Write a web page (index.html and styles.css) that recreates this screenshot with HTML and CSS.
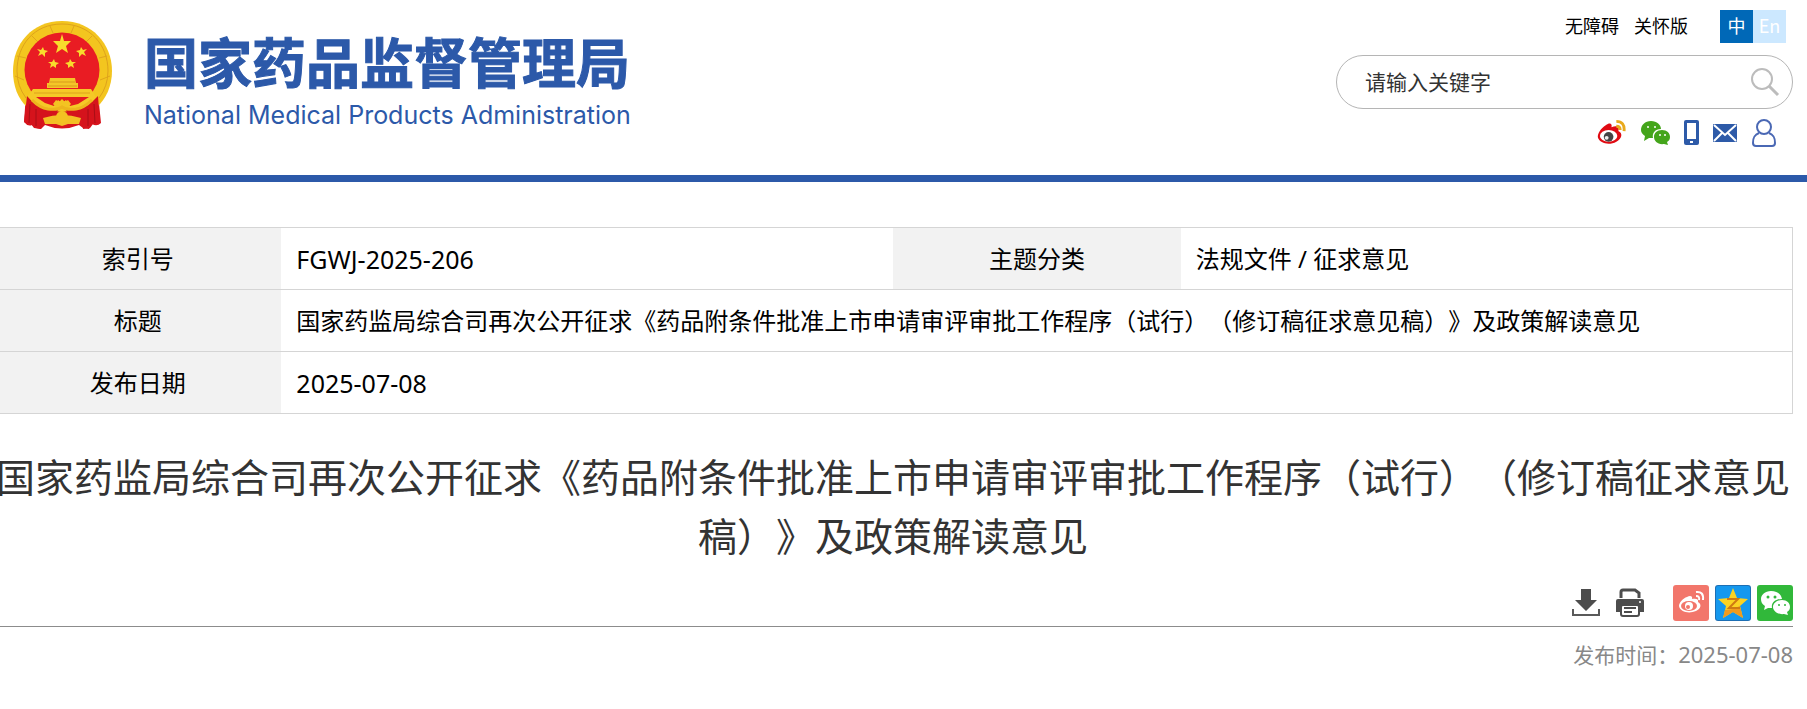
FILE: index.html
```html
<!DOCTYPE html>
<html lang="zh-CN">
<head>
<meta charset="utf-8">
<meta name="viewport" content="width=device-width, initial-scale=1">
<title>国家药品监督管理局</title>
<link rel="stylesheet" href="styles.css">
</head>
<body>

<header class="header">
	<a class="logo" href="#">
		<svg class="emblem" viewBox="0 0 100 110" aria-hidden="true">
			<path d="M14 74 L50 80 L86 74 L89 103 Q85 107 80 104 L77 109 L71 108 L67 105 Q50 112 33 105 L29 109 L24 108 L20 105 Q16 107 12 102 Z" fill="#d8141c"/>
			<path d="M50 1 C80 1 100 24 100 51 C100 66 94 79 85 87 L50 92 L15 87 C6 79 1 66 1 51 C1 24 20 1 50 1Z" fill="#f3c51f"/>
			<path d="M50 4 C78 4 96 25 96 51 Q96 66 87 78 M50 4 C22 4 5 25 5 51 Q5 66 14 78" fill="none" stroke="#dda21c" stroke-width="1"/>
			<path d="M5 36 L14 38 M3 56 L12 60 M95 36 L87 38 M98 56 L88 60 M20 16 L26 22 M80 16 L74 22 M38 6 L41 13 M62 6 L59 13" stroke="#e0a51c" stroke-width="1"/>
			<circle cx="50" cy="50" r="37.500" fill="#e91c23"/>
			<g fill="#f8dc2c">
				<path d="M50 14 L52 21 L59 21 L54 26 L56 33 L50 29 L44 33 L46 26 L41 21 L48 21Z"/>
				<path d="M31 27 L32 30 L36 31 L33 33 L33 37 L30 34 L26 36 L28 32 L25 29 L29 30Z"/>
				<path d="M69 27 L68 30 L64 31 L67 33 L67 37 L70 34 L74 36 L72 32 L75 29 L71 30Z"/>
				<path d="M42 39 L43 42 L47 43 L44 45 L44 48 L41 46 L38 48 L39 44 L36 42 L40 42Z"/>
				<path d="M58 39 L57 42 L53 43 L56 45 L56 48 L59 46 L62 48 L61 44 L64 42 L60 42Z"/>
			</g>
			<path d="M38 58 H63 L64 63 H66 V68 H35 V63 H37Z" fill="#f4c628"/>
			<path d="M38 62 H63 M36 66 H65" stroke="#d99a1b" stroke-width="1"/>
			<path d="M21 69 H79 L84 77 L79 87 L66 90 L50 86 L34 90 L20 87 L15 77Z" fill="#f5c927"/>
			<path d="M22 73 H78" stroke="#dda21c" stroke-width="1"/>
			<path d="M24 77 H77 L66 84 L58 86 L54 80 L50 83 L46 80 L42 86 L33 83Z" fill="#e4191f"/>
			<path d="M41 84 L44 80 L47 82 L50 79 L53 82 L56 80 L59 84 L54 89 H46Z" fill="#f3c322"/>
			<path d="M15 76 Q24 87 33 89 L46 90 L42 98 L30 99 L29 109 L22 108 L19 104 L12 102Z M86 76 Q76 87 67 89 L54 90 L58 98 L70 99 L71 109 L78 108 L81 104 L88 102Z" fill="#d5131c"/>
			<path d="M31 98 Q50 92 69 98 L67 104 H56 L50 106 L44 104 H33Z" fill="#f3bf25"/>
			<path d="M18 84 L17 103 M24 89 L24 106 M82 84 L83 103 M76 89 L76 106" stroke="#a80e16" stroke-width="1"/>
			<path d="M20 80 Q28 88 36 89 Q46 90 50 87 Q54 90 64 89 Q72 88 80 80" fill="none" stroke="#edb51d" stroke-width="3"/>
			<circle cx="50" cy="97" r="6" fill="#f3c322"/>
		</svg>
		<span class="logo_text">
			<span class="logo_cn">国家药品监督管理局</span>
			<span class="logo_en">National Medical Products Administration</span>
		</span>
	</a>

	<div class="header_right">
		<div class="top_links">
			<a href="#">无障碍</a>
			<a href="#">关怀版</a>
			<div class="lang"><a class="on" href="#">中</a><a href="#">En</a></div>
		</div>
		<form class="search">
			<input type="text" name="keyword" placeholder="请输入关键字" aria-label="请输入关键字">
			<button type="button" aria-label="搜索">
				<svg width="30" height="30" viewBox="0 0 30 30" fill="none" stroke="#bcbcbc" stroke-width="2"><circle cx="12" cy="12" r="10"/><path d="M19 19 L28 28" stroke-width="3"/></svg>
			</button>
		</form>
		<div class="social">
			<a href="#" aria-label="微博">
				<svg width="29" height="28" viewBox="0 0 30 28">
					<path d="M9 6 C13 3 16 4 15 8 C20 6 24 7 22 12 C27 14 26 20 20 23 C13 27 3 25 1 19 C0 15 4 9 9 6Z" fill="#e00a12"/>
					<ellipse cx="12" cy="17" rx="9" ry="6" fill="#fff"/>
					<circle cx="12" cy="18" r="5" fill="#444"/>
					<circle cx="10" cy="19" r="2" fill="#eee"/>
					<path d="M20 2 Q29 2 28 12 M20 7 Q24 7 24 11" fill="none" stroke="#e8a91c" stroke-width="3"/>
				</svg>
			</a>
			<a href="#" aria-label="微信">
				<svg width="30" height="28" viewBox="0 0 30 28">
					<path d="M11 2 C17 2 21 6 21 10 C15 10 12 14 13 19 L9 19 L4 22 L5 17 C2 15 1 13 1 11 C1 6 5 2 11 2Z" fill="#44a51b"/>
					<path d="M22 11 C27 11 30 14 30 18 C30 20 29 22 27 23 L28 26 L24 25 C18 26 14 22 14 18 C14 14 17 11 22 11Z" fill="#44a51b"/>
					<g fill="#fff"><circle cx="8" cy="8" r="1"/><circle cx="15" cy="8" r="1"/><circle cx="20" cy="16" r="1"/><circle cx="25" cy="16" r="1"/></g>
				</svg>
			</a>
			<a href="#" aria-label="手机">
				<svg width="15" height="28" viewBox="0 0 15 28"><rect x="0" y="1" width="15" height="25" rx="2" fill="#2d5aa8"/><rect x="3" y="4" width="9" height="16" fill="#fff"/><rect x="6" y="22" width="3" height="2" fill="#fff"/></svg>
			</a>
			<a href="#" aria-label="邮箱">
				<svg width="24" height="28" viewBox="0 0 24 28"><rect x="0" y="5" width="24" height="18" rx="1" fill="#2d5aa8"/><path d="M1 6 L12 16 L23 6 M1 22 L9 14 M23 22 L15 14" fill="none" stroke="#fff" stroke-width="2"/></svg>
			</a>
			<a href="#" aria-label="用户">
				<svg width="26" height="28" viewBox="0 0 26 28" fill="none" stroke="#4a68b4" stroke-width="2"><circle cx="13" cy="8" r="7"/><path d="M8 14 C3 16 2 19 2 24 Q2 27 5 27 H21 Q24 27 24 24 C24 19 23 16 18 14"/></svg>
			</a>
		</div>
	</div>
</header>

<main class="article">
	<table class="info">
		<tbody>
			<tr>
				<th scope="row">索引号</th>
				<td class="num">FGWJ-2025-206</td>
				<th scope="row">主题分类</th>
				<td>法规文件 / 征求意见</td>
			</tr>
			<tr>
				<th scope="row">标题</th>
				<td colspan="3">国家药监局综合司再次公开征求《药品附条件批准上市申请审评审批工作程序（试行）（修订稿征求意见稿）》及政策解读意见</td>
			</tr>
			<tr>
				<th scope="row">发布日期</th>
				<td class="num" colspan="3">2025-07-08</td>
			</tr>
		</tbody>
	</table>

	<h1>国家药监局综合司再次公开征求《药品附条件批准上市申请审评审批工作程序（试行）（修订稿征求意见稿）》及政策解读意见</h1>

	<div class="tools">
		<button type="button" aria-label="下载">
			<svg width="28" height="28" viewBox="0 0 28 28"><path d="M9 0 H19 V11 H25 L14 22 L3 11 H9Z" fill="#4d4d4d"/><path d="M1 20 V26 H27 V20" fill="none" stroke="#5a5a5a" stroke-width="2"/></svg>
		</button>
		<button type="button" aria-label="打印">
			<svg width="30" height="30" viewBox="0 0 30 30">
				<path d="M6 10 V4 Q6 2 8 2 H20 L24 5 V10" fill="none" stroke="#4d4d4d" stroke-width="3"/>
				<path d="M3 11 H27 Q29 11 29 13 V24 H1 V13 Q1 11 3 11Z" fill="#4d4d4d"/>
				<circle cx="25" cy="14" r="1" fill="#fff"/>
				<rect x="6" y="17" width="18" height="11" rx="2" fill="#fff" stroke="#4d4d4d" stroke-width="2"/>
				<path d="M9 20 H21 M9 24 H17" stroke="#4d4d4d" stroke-width="2"/>
			</svg>
		</button>
		<div class="share">
			<a href="#" aria-label="分享到微博">
				<svg width="36" height="36" viewBox="0 0 36 36">
					<rect width="36" height="36" rx="3" fill="#f2766b"/>
					<path d="M14 12 C17 10 20 11 19 14 C23 13 26 14 25 17 C29 19 28 24 23 26 C16 29 7 27 6 21 C6 18 10 13 14 12Z" fill="#fff"/>
					<ellipse cx="16" cy="21" rx="8" ry="5" fill="#f2766b"/>
					<circle cx="16" cy="21" r="4" fill="#fff"/><circle cx="15" cy="22" r="2" fill="#f2766b"/>
					<path d="M23 7 Q31 6 30 15 M23 11 Q27 11 26 15" fill="none" stroke="#fff" stroke-width="2"/>
				</svg>
			</a>
			<a href="#" aria-label="分享到QQ空间">
				<svg width="36" height="36" viewBox="0 0 36 36">
					<rect width="36" height="36" rx="3" fill="#1d6fb4"/>
					<rect x="1" y="1" width="34" height="34" rx="2" fill="#1598ee"/>
					<path d="M18 3 L22 13 L33 14 L25 21 L28 33 L18 27 L8 33 L11 21 L3 14 L14 13Z" fill="#fbd323"/>
					<path d="M18 27 L28 33 L25 21 L18 24 L10 25 L8 33Z" fill="#f09a1d"/>
					<path d="M12 14 H23 L14 23 H25" fill="none" stroke="#cf7a12" stroke-width="2"/>
				</svg>
			</a>
			<a href="#" aria-label="分享到微信">
				<svg width="36" height="36" viewBox="0 0 36 36">
					<rect width="36" height="36" rx="3" fill="#31b83a"/>
					<path d="M14 6 C20 6 24 9 25 14 C18 14 14 18 15 23 L11 23 L7 25 L8 21 C5 19 4 17 4 14 C4 10 8 6 14 6Z" fill="#fff"/>
					<path d="M25 15 C30 15 33 18 33 22 C33 24 32 26 30 27 L31 30 L27 29 C21 30 16 26 16 22 C16 18 20 15 25 15Z" fill="#fff"/>
					<g fill="#31b83a"><circle cx="11" cy="12" r="1.500"/><circle cx="18" cy="12" r="1.500"/><circle cx="22" cy="20" r="1"/><circle cx="28" cy="20" r="1"/></g>
				</svg>
			</a>
		</div>
	</div>
	<p class="pubtime">发布时间：<span>2025-07-08</span></p>
</main>

</body>
</html>
```
FILE: styles.css
```css
*{
box-sizing:border-box;
}
body{
margin:0;
background:#fff;
color:#000;
font-family:"Noto Sans","Noto Sans CJK SC",sans-serif;
text-spacing-trim:space-all;
}
a{
color:inherit;
text-decoration:none;
}
svg{
display:block;
}
button{
padding:0;
border:0;
background:none;
cursor:pointer;
}

/* header */
.header{
display:flex;
justify-content:space-between;
align-items:flex-start;
padding:10px 14px 28px 12px;
border-bottom:7px solid #2c59a9;
}
.logo{
display:flex;
gap:32px;
padding-top:10px;
color:#2c59a9;
}
.emblem{
width:100px;
height:110px;
}
.logo_text{
display:flex;
flex-direction:column;
padding-top:11px;
white-space:nowrap;
}
.logo_cn{
font:bold 54px/60px "Noto Sans CJK SC",sans-serif;
-webkit-text-stroke:1px #2c59a9;
}
.logo_en{
font:25px/30px Inter,Arial,sans-serif;
padding-top:9px;
}
.header_right{
width:457px;
}
.top_links{
display:flex;
justify-content:flex-end;
align-items:flex-start;
gap:15px;
padding-right:7px;
font-size:18px;
line-height:31px;
}
.top_links a{
font-family:"Noto Sans CJK SC",sans-serif;
}
.lang{
display:flex;
margin-left:17px;
background:#cce8ff;
color:#fff;
text-align:center;
}
.lang a{
width:33px;
height:33px;
}
.lang .on{
background:#0068b7;
}
.search{
display:flex;
align-items:center;
height:54px;
margin-top:12px;
padding:0 12px 0 28px;
border:1px solid #b5b5b5;
border-radius:27px;
}
.search input{
flex:1;
min-width:0;
padding:0 0 3px;
border:0;
outline:0;
background:none;
font:21px/30px "Noto Sans CJK SC",sans-serif;
}
.search input::placeholder{
color:#333;
opacity:1;
}
.social{
display:flex;
justify-content:flex-end;
gap:14px;
padding:10px 16px 0 0;
}

/* article */
.article{
margin:45px 14px 0 -7px;
}
.info{
width:100%;
table-layout:fixed;
border-collapse:collapse;
border:1px solid #d5d5d5;
font-size:24px;
line-height:36px;
}
.info tr{
height:62px;
border-top:1px solid #d5d5d5;
}
.info th{
width:16%;
padding:0;
background:#f2f2f2;
font-weight:normal;
}
.info td{
padding:0 15px;
}
.info .num{
font-size:25px;
}
h1{
margin:33px 0 20px;
color:#333;
font-size:39px;
font-weight:normal;
line-height:59px;
text-align:center;
}
.tools{
display:flex;
justify-content:flex-end;
align-items:center;
gap:15px;
padding-bottom:5px;
border-bottom:1px solid #8c8c8c;
}
.share{
display:flex;
gap:6px;
margin-left:13px;
}
.pubtime{
margin:12px 0 0;
color:#888;
font-size:21px;
line-height:30px;
text-align:right;
}
.pubtime span{
font-size:22px;
}
```
